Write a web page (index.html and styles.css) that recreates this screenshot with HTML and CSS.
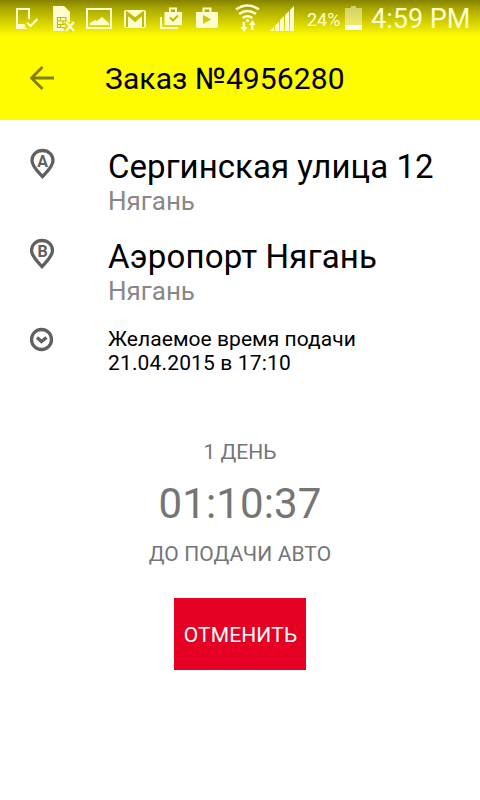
FILE: index.html
```html
<!DOCTYPE html>
<html lang="ru">
<head>
    <meta charset="UTF-8">
    <meta name="viewport" content="width=device-width, initial-scale=1.0">
    <title>Заказ №4956280</title>
    <link rel="stylesheet" href="styles.css">
</head>
<body>
    <header>
        <div class="status-bar">
            <svg class="status-icon" width="36" height="38" viewBox="10 0 36 38">
                <path d="M29 19V9H17v17" fill="none" stroke="currentColor" stroke-width="2"/>
                <path d="M16 29v-5h8l2 2-2 1 4 2z"/>
                <path d="M27 22.500l3.500 3.500 7-7" fill="none" stroke="currentColor" stroke-width="2"/>
            </svg>
            <svg class="status-icon" width="36" height="38" viewBox="46 0 36 38">
                <path d="M53 6h11l6 6v19H53z"/>
                <path class="cut thin" d="M57.500 17.500h8.500v10h-8.500zM57.500 21h8M57.500 24.500h8M60.500 17v4M60.500 24v4M63 21v4"/>
                <path class="cut wide" d="M65 22l8 9M73 22l-8 9"/>
                <path d="M66 22l8 9M74 22l-8 9" fill="none" stroke="currentColor" stroke-width="2.200"/>
            </svg>
            <svg class="status-icon" width="36" height="38" viewBox="82 0 36 38">
                <path d="M87 9h24v19H87z" fill="none" stroke="currentColor" stroke-width="2"/>
                <path d="M90 25v-2l5-3 2 1 5-4 7 6v2z"/>
            </svg>
            <svg class="status-icon" width="34" height="38" viewBox="118 0 34 38">
                <path d="M126 10h18q2 0 2 2v14q0 2-2 2h-18q-2 0-2-2V12q0-2 2-2z"/>
                <path class="cut" d="M127 27V14l8 7 8-7v13M126 11.500l9 7 9-7"/>
            </svg>
            <svg class="status-icon" width="36" height="38" viewBox="152 0 36 38">
                <path d="M161 17v11h17" fill="none" stroke="currentColor" stroke-width="2"/>
                <path d="M164.500 12H182v13h-17.500z"/>
                <path d="M170 12V8.500h6V12" fill="none" stroke="currentColor" stroke-width="2"/>
                <path class="cut" d="M170 17.500l3 3 5-5"/>
            </svg>
            <svg class="status-icon" width="36" height="38" viewBox="188 0 36 38">
                <path fill-rule="evenodd" d="M196 12h22v14q0 2-2 2h-18q-2 0-2-2zM203 15v9l8-4.500z"/>
                <path d="M203.500 12V8.500h7V12" fill="none" stroke="currentColor" stroke-width="2"/>
            </svg>
            <svg class="status-icon" width="40" height="38" viewBox="224 0 40 38">
                <path d="M236 9.500q11.500-8 23 0M239 14q8.500-6 17 0M242.500 18q5-3.500 10 0" fill="none" stroke="currentColor" stroke-width="2.500"/>
                <circle cx="247.500" cy="20.500" r="1.800"/>
                <path d="M242.500 22h2.500v5h2.500L244 32l-3.500-5h2zM251 30h2.500v-5h2l-3-5-3.500 5h2z"/>
            </svg>
            <svg class="status-icon" width="36" height="38" viewBox="264 0 36 38">
                <path d="M270 31l4-4v4zM275 31v-5l4-4v9zM280 31V20l4-4v15zM285 31V15l4-4v20zM290 31V10l4-4v25z"/>
            </svg>
            <span class="battery-level">24%</span>
            <svg class="status-icon" width="24" height="38" viewBox="342 0 24 38">
                <path d="M345 8h6V6h5v2h6v17h-17z" opacity=".5"/>
                <path d="M345 25h17v5h-17z" fill="#fff"/>
            </svg>
            <span class="clock">4:59 PM</span>
        </div>
        <div class="toolbar">
            <svg class="back" width="24" height="24" viewBox="0 0 24 24">
                <path d="M24 12H2M12.500 1L1.500 12l11 11"/>
            </svg>
            <h1>Заказ №4956280</h1>
        </div>
    </header>

    <main>
        <div class="row">
            <svg class="row-icon" width="26" height="34" viewBox="0 0 26 34">
                <path d="M12.500 3.500C6.500 3.500 2 7.900 2 13.400c0 6 6 11 10.500 16.200C17 24.400 23 19.400 23 13.400 23 7.900 18.500 3.500 12.500 3.500z"/>
                <text x="12.500" y="19.500">A</text>
            </svg>
            <div>
                <div class="street">Сергинская улица 12</div>
                <div class="city">Нягань</div>
            </div>
        </div>
        <div class="row">
            <svg class="row-icon" width="26" height="34" viewBox="0 0 26 34">
                <path d="M12 3.500C6 3.500 1.500 7.900 1.500 13.400c0 6 6 11 10.500 16.200 4.500-5.200 10.500-10.200 10.500-16.200C22.500 7.900 18 3.500 12 3.500z"/>
                <text x="12.500" y="19.500">B</text>
            </svg>
            <div>
                <div class="street street-b">Аэропорт Нягань</div>
                <div class="city">Нягань</div>
            </div>
        </div>
        <div class="row">
            <svg class="row-icon" width="26" height="26" viewBox="0 0 26 26">
                <circle cx="11.500" cy="12.500" r="10"/>
                <path d="M7 10.500l4.500 4 5-4"/>
            </svg>
            <div class="time">
                <div class="wish">Желаемое время подачи</div>
                <div class="date">21.04.2015 в 17:10</div>
            </div>
        </div>

        <div class="countdown">
            <div class="days">1 ДЕНЬ</div>
            <div class="timer">01:10:37</div>
            <div class="until">ДО ПОДАЧИ АВТО</div>
            <button class="cancel">ОТМЕНИТЬ</button>
        </div>
    </main>
</body>
</html>
```
FILE: styles.css
```css
body {
    margin: 0;
    width: 480px;
    height: 800px;
    overflow: hidden;
    font-family: Roboto, sans-serif;
    color: #000;
    background-color: #fff;
}
header {
    height: 120px;
    background: linear-gradient(#858200 0, #a8a500 8px, #fffb00 36px, #fffb00 100%);
}
.status-bar {
    display: flex;
    height: 38px;
    padding-left: 10px;
    line-height: 38px;
    color: #fffdd0;
    white-space: nowrap;
}
.status-icon {
    flex: none;
    fill: currentColor;
}
.status-icon .cut {
    fill: none;
    stroke: #c0bd00;
    stroke-width: 2;
}
.status-icon .thin {
    stroke-width: 1.2;
}
.status-icon .wide {
    stroke: #dedb00;
    stroke-width: 5;
}
.battery-level {
    width: 35px;
    padding-left: 7px;
    font-size: 18px;
    line-height: 39px;
}
.clock {
    padding-left: 5px;
    font-size: 27px;
}
.toolbar {
    display: flex;
    align-items: center;
    height: 80px;
    padding-left: 30px;
}
.back {
    fill: none;
    stroke: #827f00;
    stroke-width: 2.8;
}
h1 {
    margin: 2px 0 0 51px;
    font-size: 30px;
    font-weight: 400;
    line-height: 40px;
    letter-spacing: 0.1px;
}
main {
    padding-top: 27px;
}
.row {
    display: flex;
    height: 90px;
    padding-left: 30px;
}
.row-icon {
    flex: none;
    margin-right: 52px;
    fill: none;
    stroke: #606060;
    stroke-width: 3.3;
}
.row-icon text {
    fill: #606060;
    stroke: none;
    font-family: Roboto, sans-serif;
    font-size: 16px;
    font-weight: 700;
    text-anchor: middle;
}
.street {
    font-size: 33px;
    line-height: 39px;
    letter-spacing: 0.05px;
}
.street-b {
    letter-spacing: 0.2px;
}
.city {
    font-size: 26px;
    line-height: 30px;
    color: #888;
}
.time {
    font-size: 21px;
    line-height: 24px;
}
.wish {
    letter-spacing: 0.05px;
}
.date {
    letter-spacing: 0.15px;
}
.countdown {
    display: flex;
    flex-direction: column;
    align-items: center;
    color: #757575;
    font-size: 21px;
}
.days {
    margin-top: 23px;
    line-height: 25px;
}
.timer {
    margin-top: 14px;
    font-size: 42px;
    line-height: 50px;
    letter-spacing: 0.15px;
}
.until {
    margin-top: 13px;
    line-height: 25px;
    letter-spacing: 0.1px;
}
.cancel {
    width: 132px;
    height: 72px;
    margin-top: 31px;
    padding: 2px 0 0 1px;
    border: none;
    background-color: #e60023;
    color: #fff;
    font-family: inherit;
    font-size: 21px;
    letter-spacing: 0.15px;
}
```
